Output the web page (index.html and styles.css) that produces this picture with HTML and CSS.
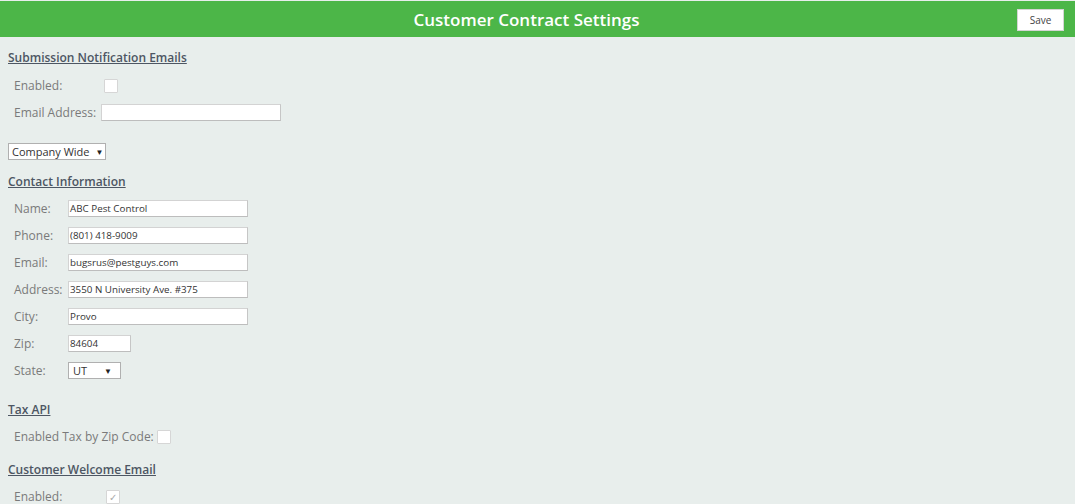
FILE: index.html
```html
<!DOCTYPE html>
<html>
<head>
<meta charset="utf-8">
<link rel="stylesheet" href="styles.css">
</head>
<body>
<header class="topbar">
  <h1 class="title">Customer Contract Settings</h1>
  <button class="save-btn">Save</button>
</header>
<main class="content">
  <section class="section section-notify">
    <h2 class="heading">Submission Notification Emails</h2>
    <div class="row">
      <span class="label label-wide">Enabled:</span>
      <span class="checkbox cb-offset"></span>
    </div>
    <div class="row">
      <span class="label label-wide">Email Address:</span>
      <span class="input input-email"></span>
    </div>
  </section>

  <div class="select select-scope"><span>Company Wide</span><span class="arrow">▼</span></div>

  <section class="section">
    <h2 class="heading">Contact Information</h2>
    <div class="row"><span class="label label-contact">Name:</span><span class="input input-long">ABC Pest Control</span></div>
    <div class="row"><span class="label label-contact">Phone:</span><span class="input input-long">(801) 418-9009</span></div>
    <div class="row"><span class="label label-contact">Email:</span><span class="input input-long">bugsrus@pestguys.com</span></div>
    <div class="row"><span class="label label-contact">Address:</span><span class="input input-long">3550 N University Ave. #375</span></div>
    <div class="row"><span class="label label-contact">City:</span><span class="input input-long">Provo</span></div>
    <div class="row"><span class="label label-contact">Zip:</span><span class="input input-short">84604</span></div>
    <div class="row"><span class="label label-contact">State:</span><div class="select select-state"><span>UT</span><span class="arrow">▼</span></div></div>
  </section>

  <section class="section section-tax">
    <h2 class="heading">Tax API</h2>
    <div class="row">
      <span class="label">Enabled Tax by Zip Code:</span>
      <span class="checkbox cb-tax"></span>
    </div>
  </section>

  <section class="section section-welcome">
    <h2 class="heading">Customer Welcome Email</h2>
    <div class="row">
      <span class="label label-wide">Enabled:</span>
      <span class="checkbox checked cb-welcome">✓</span>
    </div>
  </section>
</main>
</body>
</html>
```
FILE: styles.css
```css
html, body {
  margin: 0;
  padding: 0;
}
body {
  background: #e8eeec;
  font-family: "Open Sans", "Liberation Sans", sans-serif;
  color: #777;
  height: 504px;
  overflow: hidden;
}
.topbar {
  margin-top: 1px;
  height: 36px;
  background: #4cb648;
  display: flex;
  align-items: center;
  justify-content: center;
  padding-right: 22px;
  position: relative;
}
.title {
  margin: 0;
  color: #fff;
  font-size: 17px;
  font-weight: 600;
}
.save-btn {
  position: absolute;
  right: 11px;
  top: 8px;
  width: 47px;
  height: 22px;
  background: #fff;
  border: 1px solid #d5d5d5;
  font-family: "Open Sans", "Liberation Sans", sans-serif;
  font-size: 10px;
  color: #444;
  padding: 0;
}
.content {
  padding: 0 8px;
}
.section {
  display: flex;
  flex-direction: column;
}
.heading {
  margin: 12px 0 5px;
  font-size: 12px;
  font-weight: 600;
  color: #4d5663;
  text-decoration: underline;
  line-height: 17px;
}
.section-notify .heading { margin-bottom: 6px; }
.row {
  display: flex;
  align-items: center;
  height: 27px;
  padding-left: 6px;
}
.label {
  font-size: 12px;
  color: #7a7a7a;
  line-height: 17px;
}
.label-wide { width: 87px; }
.label-contact { width: 54px; }
.checkbox {
  width: 12px;
  height: 12px;
  background: #fff;
  border: 1px solid #d6d6d6;
  border-radius: 1px;
  display: inline-flex;
  align-items: center;
  justify-content: center;
  font-size: 10px;
  color: #aaa;
  line-height: 1;
}
.cb-offset { margin-left: 3px; }
.cb-tax { margin-left: 3px; }
.cb-welcome { margin-left: 5px; }
.input {
  height: 15px;
  background: #fff;
  border: 1px solid #d3d3d3;
  border-right-color: #c6c6c6;
  border-bottom-color: #bdbdbd;
  font-size: 9.8px;
  color: #333;
  line-height: 15px;
  padding-left: 1px;
  box-sizing: content-box;
  white-space: nowrap;
}
.input-email { width: 177px; }
.input-long { width: 177px; }
.input-short { width: 60px; }
.select {
  display: inline-flex;
  align-items: center;
  background: #fff;
  border: 1px solid #b0b0b0;
  height: 15px;
  font-size: 11px;
  color: #333;
  box-sizing: content-box;
}
.select .arrow {
  font-size: 8px;
  color: #222;
}
.select-scope {
  margin-top: 17px;
  padding-left: 3px;
  width: 98px;
  gap: 6px;
  box-sizing: border-box;
  height: 17px;
}
.select-state {
  width: 53px;
  height: 17px;
  box-sizing: border-box;
  padding-left: 4px;
  justify-content: space-between;
  padding-right: 8px;
  font-size: 11px;
}
.section-tax .heading { margin-top: 17px; }
.section-welcome .heading { margin-top: 11px; }
```
